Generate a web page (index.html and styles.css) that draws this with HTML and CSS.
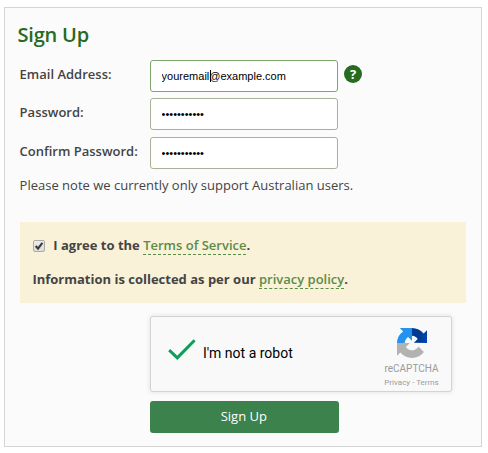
FILE: index.html
```html
<!DOCTYPE html>
<html lang="en">
<head>
<meta charset="utf-8">
<title>Sign Up</title>
<link rel="stylesheet" href="styles.css">
</head>
<body>
<form class="panel">
  <h1 class="title">Sign Up</h1>
  <div class="row">
    <label class="label" for="email">Email Address:</label>
    <div class="field"><input class="input input-active" id="email" type="text" value="youremail@example.com"><span class="caret"></span></div>
    <span class="help">?</span>
  </div>
  <div class="row">
    <label class="label" for="pw">Password:</label>
    <div class="field"><input class="input" id="pw" type="password" value="abcdefghijk"></div>
  </div>
  <div class="row row-last">
    <label class="label" for="pw2">Confirm Password:</label>
    <div class="field"><input class="input" id="pw2" type="password" value="abcdefghijk"></div>
  </div>
  <p class="note">Please note we currently only support Australian users.</p>
  <div class="agreement">
    <div class="agree-line">
      <svg class="checkbox" viewBox="0 0 12 12"><defs><linearGradient id="g" x1="0" y1="0" x2="0" y2="1"><stop offset="0" stop-color="#eeeeee"/><stop offset="1" stop-color="#dcdcdc"/></linearGradient></defs><rect x=".5" y=".5" width="11" height="11" rx="1.5" fill="url(#g)" stroke="#aaa9a5"/><path d="M2.7 6.1 5 8.6 9.4 2.9" fill="none" stroke="#3c3c3c" stroke-width="2.2"/></svg>
      <span class="agree-text">I agree to the <a class="link">Terms of Service</a>.</span>
    </div>
    <div class="info-line"><span class="info-text">Information is collected as per our <a class="link">privacy policy</a>.</span></div>
  </div>
  <div class="captcha">
    <svg class="tick" viewBox="0 0 28 21"><path d="M1.2 11.2 9.3 18.8 26.6 1.3" fill="none" stroke="#0f9d58" stroke-width="3"/></svg>
    <span class="robot">I'm not a robot</span>
    <div class="brand">
      <svg class="logo" viewBox="0 0 64 64">
        <defs>
          <linearGradient id="dark" x1="0" y1="0" x2="1" y2="0"><stop offset=".45" stop-color="#003b92"/><stop offset="1" stop-color="#0046b0"/></linearGradient>
          <clipPath id="right"><rect x="32" y="0" width="32" height="32"/></clipPath>
          <clipPath id="left"><rect x="0" y="0" width="32" height="32"/></clipPath>
        </defs>
        <path fill="#b2b2b2" d="M.001 32.045l.013 1.37v25.898l7.16-7.16c5.86 7.173 14.774 11.754 24.765 11.754 10.395 0 19.63-4.96 25.474-12.64l-11.736-11.86a15.55 15.55 0 0 1-4.754 5.334c-2.05 1.6-4.952 2.906-8.968 2.906-.485 0-.86-.057-1.135-.163-4.976-.393-9.288-3.14-11.828-7.124l8.307-8.307-27.3.012"/>
        <path fill="#2592ee" clip-path="url(#left)" d="M32 .094H6l7.16 7.16C4.58 13.147 0 22.06 0 32h16.26c.4-4.976 3.14-9.288 7.287-12.963L32 27.344z"/>
        <path fill="url(#dark)" clip-path="url(#right)" d="M64 31.955V4.687l-7.16 7.16C50.967 4.674 42.05.093 32 .093v16.3c5.4.25 9.74 2.997 12.28 6.981l-8.307 8.307z"/>
      </svg>
      <div class="brand-name">reCAPTCHA</div>
      <div class="brand-links">Privacy - Terms</div>
    </div>
  </div>
  <button class="submit" type="button">Sign Up</button>
</form>
</body>
</html>
```
FILE: styles.css
```css
* { box-sizing: border-box; }
body { margin: 0; padding: 7px 0 0 4px; background: #fff; font-family: "Open Sans", sans-serif; font-size: 13px; color: #444; }
.panel { width: 478px; height: 440px; border: 1px solid #d5d5d5; background: #fbfbfb; padding: 13px 15px 0; }
.title { margin: 0 0 12px -2.5px; font-size: 20px; line-height: 27px; font-weight: 600; letter-spacing: -.2px; color: #276a20; }
.row { display: flex; height: 32px; margin-bottom: 6px; }
.row + .row-last { margin-top: 7px; }
.row-last { margin-bottom: 7px; }
.label { width: 130px; margin-left: -.4px; margin-right: .4px; line-height: 28px; font-weight: 600; white-space: nowrap; }
.field { position: relative; width: 188px; height: 32px; }
.input { display: block; width: 188px; height: 32px; padding: 0 10.6px 1px; border: 1px solid #a6b197; border-radius: 3px; background: #fff; font: 11px "Liberation Sans", Arial, sans-serif; color: #000; outline: none; }
.input-active { border-color: #7da768; }
.caret { position: absolute; left: 60px; top: 10px; width: 1px; height: 12px; background: #000; }
.help { width: 18px; height: 18px; margin: 5px 0 0 6px; border-radius: 50%; background: #276a20; color: #fff; font-size: 13px; line-height: 18px; font-weight: 700; text-align: center; }
.note { margin: 0 0 0 -.4px; line-height: 18px; height: 46px; }
.agreement { width: 446px; height: 81px; padding: 14px 13px 0; background: #faf1d9; font-weight: 700; white-space: nowrap; }
.agree-line { display: flex; height: 34px; line-height: 18px; }
.checkbox { width: 12px; height: 12px; margin: 4px 8.3px 0 0; }
.info-line { margin-left: -.6px; line-height: 18px; }
.link { font-weight: 600; color: #5b8c46; border-bottom: 1px dashed #5b8c46; }
.captcha { display: flex; width: 302px; height: 76px; margin: 13px 0 9px 130px; border: 1px solid #d3d3d3; border-radius: 3px; background: #f9f9f9; box-shadow: 0 0 4px 1px rgba(0,0,0,.08); font-family: Roboto, sans-serif; }
.tick { width: 28px; height: 21px; margin: 22px 0 0 17px; }
.robot { margin: 27px 0 0 7px; width: 181px; font-size: 14px; line-height: 18px; color: #000; white-space: nowrap; }
.brand { width: 55px; margin-top: 11px; color: #9b9b9b; text-align: center; white-space: nowrap; }
.logo { display: block; width: 30px; height: 30px; margin: 0 auto 4px; }
.brand-name { font-size: 10px; line-height: 14px; }
.brand-links { margin-top: 1px; font-size: 8px; line-height: 12px; }
.submit { display: block; width: 189px; height: 32px; margin-left: 130px; padding: 0 1.4px 2px 0; border: 0; border-radius: 3px; background: #3b824c; color: #fff; font: 13px "Open Sans", sans-serif; }
```
